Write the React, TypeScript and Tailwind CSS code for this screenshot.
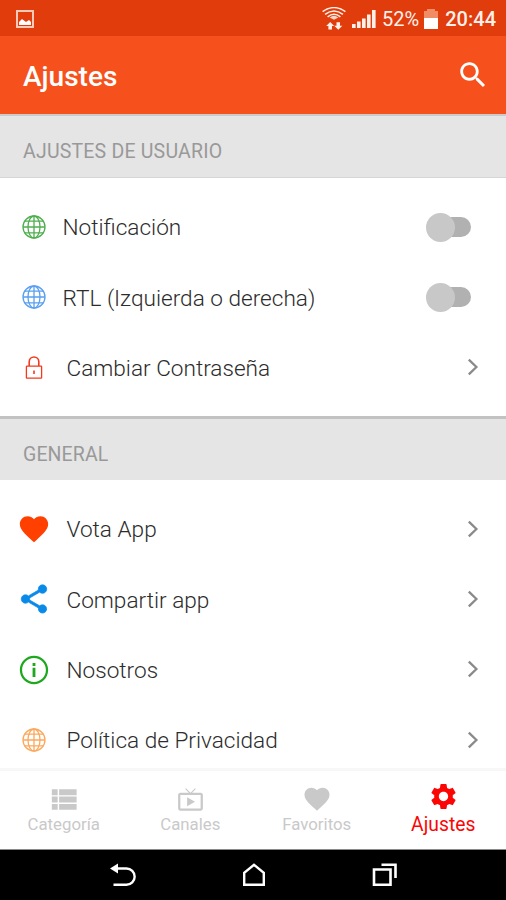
import { clsx } from "clsx";
import type { ReactNode } from "react";

const SETTINGS_PATH =
  "M19.14 12.94c.04-.3.06-.61.06-.94 0-.32-.02-.64-.07-.94l2.03-1.58c.18-.14.23-.41.12-.61l-1.92-3.32c-.12-.22-.37-.29-.59-.22l-2.39.96c-.5-.38-1.03-.7-1.62-.94l-.36-2.54c-.04-.24-.24-.41-.48-.41h-3.84c-.24 0-.43.17-.47.41l-.36 2.54c-.59.24-1.13.57-1.62.94l-2.39-.96c-.22-.08-.47 0-.59.22L2.74 8.87c-.12.21-.08.47.12.61l2.03 1.58c-.05.3-.09.63-.09.94s.02.64.07.94l-2.03 1.58c-.18.14-.23.41-.12.61l1.92 3.32c.12.22.37.29.59.22l2.39-.96c.5.38 1.03.7 1.62.94l.36 2.54c.05.24.24.41.48.41h3.84c.24 0 .44-.17.47-.41l.36-2.54c.59-.24 1.13-.56 1.62-.94l2.39.96c.22.08.47 0 .59-.22l1.92-3.32c.12-.22.07-.47-.12-.61l-2.01-1.58zM12 15.6c-1.98 0-3.6-1.62-3.6-3.6s1.62-3.6 3.6-3.6 3.6 1.62 3.6 3.6-1.62 3.6-3.6 3.6z";
const HEART_PATH =
  "M12 21.35l-1.45-1.32C5.4 15.36 2 12.28 2 8.5 2 5.42 4.42 3 7.5 3c1.74 0 3.41.81 4.5 2.09C13.09 3.81 14.76 3 16.5 3 19.58 3 22 5.42 22 8.5c0 3.78-3.4 6.86-8.55 11.54L12 21.35z";
const SHARE_PATH =
  "M18 16.08c-.76 0-1.44.3-1.96.77L8.91 12.7c.05-.23.09-.46.09-.7s-.04-.47-.09-.7l7.05-4.11c.54.5 1.25.81 2.04.81 1.66 0 3-1.34 3-3s-1.34-3-3-3-3 1.34-3 3c0 .24.04.47.09.7L8.04 9.81C7.5 9.31 6.79 9 6 9c-1.66 0-3 1.34-3 3s1.34 3 3 3c.79 0 1.5-.31 2.04-.81l7.12 4.16c-.05.21-.08.43-.08.65 0 1.61 1.31 2.92 2.92 2.92s2.92-1.31 2.92-2.92-1.31-2.92-2.92-2.92z";
const INFO_PATH =
  "M11 17h2v-6.6h-2v6.6zm1-15C6.48 2 2 6.48 2 12s4.48 10 10 10 10-4.48 10-10S17.52 2 12 2zm0 18.4c-4.63 0-8.4-3.77-8.4-8.4s3.77-8.4 8.4-8.4 8.4 3.77 8.4 8.4-3.77 8.4-8.4 8.4zM11 9.2h2V7h-2v2.2z";
const SEARCH_PATH =
  "M15.5 14h-.79l-.28-.27C15.41 12.59 16 11.11 16 9.5 16 5.91 13.09 3 9.5 3S3 5.91 3 9.5 5.91 16 9.5 16c1.61 0 3.09-.59 4.23-1.57l.27.28v.79l5 4.99L20.49 19l-4.99-5zm-6 0C7.01 14 5 11.99 5 9.5S7.01 5 9.5 5 14 7.01 14 9.5 11.99 14 9.5 14z";
const LIST_PATH = "M4 14h4v-4H4v4zm0 5h4v-4H4v4zM4 9h4V5H4v4zm5 5h12v-4H9v4zm0 5h12v-4H9v4zM9 5v4h12V5H9z";
const TV_PATH =
  "M21 6h-7.59l3.29-3.29L16 2l-4 4-4-4-.71.71L10.59 6H3c-1.1 0-2 .89-2 2v12c0 1.1.9 2 2 2h18c1.1 0 2-.9 2-2V8c0-1.11-.9-2-2-2zm0 14H3V8h18v12zM9 10v8l7-4z";

function Glyph({ d, className }: { d: string; className: string }) {
  return (
    <svg viewBox="0 0 24 24" fill="currentColor" className={className}>
      <path d={d} />
    </svg>
  );
}

function Globe({ className }: { className: string }) {
  return (
    <svg viewBox="0 0 24 24" fill="none" stroke="currentColor" strokeWidth="1.3" className={clsx("size-6", className)}>
      <circle cx="12" cy="12" r="11" />
      <ellipse cx="12" cy="12" rx="6" ry="11" />
      <path d="M12 1v22M1 12h22M2.8 6.2h18.4M2.8 17.8h18.4" />
    </svg>
  );
}

function Lock() {
  return (
    <svg viewBox="0 0 18 24" fill="none" stroke="currentColor" strokeWidth="1.3" className="h-6 w-[18px] text-[#f4391c]">
      <rect x="1.4" y="10.2" width="15.2" height="12" rx="0.6" />
      <path d="M4.2 10V5.8a4.8 4.8 0 0 1 9.6 0V10" strokeWidth="1.6" />
      <path d="M9 14.4v3.6" strokeWidth="1.6" />
    </svg>
  );
}

function Chevron() {
  return (
    <svg viewBox="0 0 12 18" fill="none" stroke="currentColor" strokeWidth="2.3" className="mr-[27px] mb-px h-[18px] w-3 text-[#8a8a8a]">
      <path d="M1.8 1.6L9.4 9l-7.6 7.4" />
    </svg>
  );
}

function Toggle() {
  return (
    <div className="mr-[35px] flex w-[45px] items-center">
      <div className="z-10 size-[29px] shrink-0 rounded-full bg-[#c8c8c8]" />
      <div className="-ml-4 h-5 w-8 shrink-0 rounded-full bg-[#b1b1b1]" />
    </div>
  );
}

function Row({ icon, label, toggle }: { icon: ReactNode; label: string; toggle?: boolean }) {
  return (
    <div className="flex h-[70.33px] shrink-0 items-center">
      <div className={clsx("flex w-[68px] shrink-0 justify-center", toggle ? "mr-[-5.5px]" : "mr-[-1.5px]")}>{icon}</div>
      <span className="flex-1 pt-0.5 text-[22.6px] font-light text-[#2c2c2c]">{label}</span>
      {toggle ? <Toggle /> : <Chevron />}
    </div>
  );
}

function Tab({ icon, label, active }: { icon: ReactNode; label: string; active?: boolean }) {
  return (
    <div className={clsx("flex flex-1 flex-col items-center pl-px", active ? "text-[#fb0505]" : "text-[#c9c9c9]")}>
      <div className={clsx("flex items-center", active ? "h-[51px]" : "h-[56px]")}>{icon}</div>
      <span className={clsx("leading-5", active ? "-mt-[7px] text-[19.3px]" : "-mt-[13px] text-[16.8px]")}>{label}</span>
    </div>
  );
}

function StatusBar() {
  return (
    <div className="flex h-9 shrink-0 items-center bg-[#e03c0c] pt-px pr-[10px] pl-4 text-[#fff0ea]">
      <svg viewBox="0 0 18 18" className="size-[18px]">
        <rect x="1" y="1" width="16" height="16" fill="none" stroke="#fcc9b8" strokeWidth="2" />
        <path d="M3 15v-3l3-3 4 3 3-2 2 2v3z" fill="#fff" />
      </svg>
      <div className="flex-1" />
      <svg viewBox="0 0 24 24" className="h-6 w-6" fill="none" stroke="currentColor" strokeWidth="1.5">
        <path d="M.6 4.6Q12-3.4 23.4 4.6M3 7.4Q12 .6 21 7.4M5.6 9.8Q12 4.6 18.4 9.8" />
        <path d="M7.6 10.4Q12 7 16.4 10.4L12 12.8z" fill="currentColor" stroke="none" opacity="0.85" />
        <path d="M4.2 19L8.2 15l4 4H10v3.6H6.4V19zM12.2 18.8h2.3V15.2H18v3.6h2.3l-4 4z" fill="currentColor" stroke="none" />
      </svg>
      <svg viewBox="0 0 24 18" className="ml-1.5 h-[18px] w-6" fill="currentColor">
        <path d="M0 14h3.6v4H0zM5 11.5h3.6V18H5zM10 8.5h3.6V18H10zM15 4.5h3.6V18H15zM20 0h3.6v18H20z" />
      </svg>
      <span className="ml-[6px] text-[20px]">52%</span>
      <svg viewBox="0 0 14 20" className="ml-[5px] h-5 w-3.5">
        <path d="M3 0h8v2h3v7H0V2h3z" fill="#f08d67" />
        <path d="M0 9h14v11H0z" fill="#fff" />
      </svg>
      <span className="ml-[7px] text-[20px] font-medium">20:44</span>
    </div>
  );
}

export default function App() {
  return (
    <div className="flex h-[900px] w-[506px] flex-col overflow-hidden bg-white font-['Roboto',sans-serif]">
      <StatusBar />

      <header className="flex h-[78px] shrink-0 items-center justify-between bg-[#f6511d] pr-4 pl-[23px] text-white">
        <h1 className="pt-[3px] text-[28px] font-medium">Ajustes</h1>
        <Glyph d={SEARCH_PATH} className="size-[34px]" />
      </header>

      <main className="flex min-h-0 flex-1 flex-col overflow-hidden">
        <h2 className="flex h-16 shrink-0 items-center border-t-2 border-b border-t-[#cacaca] border-b-[#d6d6d6] bg-[#e5e5e5] pt-[11px] pl-[23px] text-[19.5px] tracking-[0.2px] text-[#999]">
          AJUSTES DE USUARIO
        </h2>
        <div className="flex h-[238px] shrink-0 flex-col pt-[14px]">
          <Row icon={<Globe className="text-[#4fae4f]" />} label="Notificación" toggle />
          <Row icon={<Globe className="text-[#5a9ff0]" />} label="RTL (Izquierda o derecha)" toggle />
          <Row icon={<Lock />} label="Cambiar Contraseña" />
        </div>

        <h2 className="flex h-16 shrink-0 items-center border-t-[3px] border-t-[#c2c2c2] bg-[#e5e5e5] pt-[10px] pl-[23px] text-[19.5px] tracking-[0.1px] text-[#999]">
          GENERAL
        </h2>
        <div className="flex flex-col pt-[14px]">
          <Row icon={<Glyph d={HEART_PATH} className="size-[34px] text-[#ff4000]" />} label="Vota App" />
          <Row
            icon={<Glyph d={SHARE_PATH} className="size-[34px] stroke-current stroke-[0.5] text-[#0a8ae8]" />}
            label="Compartir app"
          />
          <Row icon={<Glyph d={INFO_PATH} className="size-[34px] text-[#1ea81e]" />} label="Nosotros" />
          <Row icon={<Globe className="text-[#fba95c]" />} label="Política de Privacidad" />
        </div>
      </main>

      <nav className="flex h-[82px] shrink-0 border-t-[3px] border-b border-t-[#f7f7f7] border-b-[#8a8a8a]">
        <Tab icon={<Glyph d={LIST_PATH} className="size-[35px]" />} label="Categoría" />
        <Tab icon={<Glyph d={TV_PATH} className="size-[27px]" />} label="Canales" />
        <Tab icon={<Glyph d={HEART_PATH} className="size-[30px]" />} label="Favoritos" />
        <Tab icon={<Glyph d={SETTINGS_PATH} className="size-[31px]" />} label="Ajustes" active />
      </nav>

      {/* Android navigation keys */}
      <div className="flex h-[50px] shrink-0 items-center justify-center gap-[106px] bg-black pl-0.5 text-white">
        <svg viewBox="0 0 26 24" className="h-6 w-[26px]" fill="none" stroke="currentColor" strokeWidth="2.4">
          <path d="M5 5.5h11.5a8 8 0 0 1 0 16.3H3.5" />
          <path d="M0 5.5L8 .5v10z" fill="currentColor" stroke="none" />
        </svg>
        <svg viewBox="0 0 24 24" className="size-6" fill="none" stroke="currentColor" strokeWidth="2.4">
          <path d="M2.2 21.8V9.8L12 1.8l9.8 8v12z" />
        </svg>
        <svg viewBox="0 0 26 24" className="h-6 w-[26px]" fill="none" stroke="currentColor" strokeWidth="2.6">
          <path d="M2 6.5h16.5v15.3H2z" />
          <path d="M9.5 1.8h14V15" />
        </svg>
      </div>
    </div>
  );
}
